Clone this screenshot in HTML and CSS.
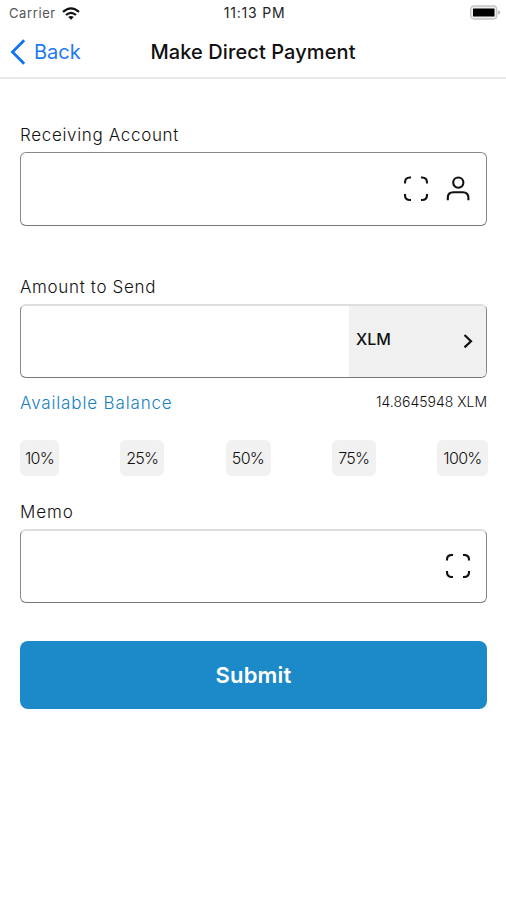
FILE: index.html
```html
<!DOCTYPE html>
<html lang="en">
<head>
<meta charset="utf-8">
<title>Make Direct Payment</title>
<link rel="stylesheet" href="styles.css">
</head>
<body>
<div class="status">
  <div class="carrier"><span class="carrier-name">Carrier</span>
    <svg width="18" height="13" viewBox="0 0 18 13" fill="none" stroke="#111" stroke-width="2.2"><path d="M1 4.8Q9-2.2 17 4.8M4 8Q9 3.6 14 8"/><path d="M6.2 10Q9 7.8 11.8 10L9 12.8Z" fill="#111" stroke="none"/></svg>
  </div>
  <span class="time">11:13 PM</span>
  <svg class="battery" width="31" height="16" viewBox="0 0 31 16"><rect x=".7" y="1" width="26" height="13" rx="3.2" fill="#eee" stroke="#c4c4c4" stroke-width="1.3"/><rect x="3" y="3.6" width="21.5" height="8" rx=".5" fill="#000"/><path d="M28.2 5.3Q30 6 30 7.5T28.2 9.7Z" fill="#aaa"/></svg>
</div>
<nav class="nav">
  <a class="back"><svg width="16" height="26" viewBox="0 0 16 26" fill="none" stroke="#0f73f5" stroke-width="2.8"><path d="M14.2 1.2 2.5 13 14.2 24.8"/></svg><span class="back-text">Back</span></a>
  <h1 class="title">Make Direct Payment</h1>
</nav>
<main class="form">
  <div class="label"><span class="l-account">Receiving Account</span></div>
  <div class="field account">
    <svg width="26" height="26" viewBox="0 0 26 26" fill="none" stroke="#111" stroke-width="2.1"><path d="M2 7.5V6.5Q2 1.5 7 1.5H8M18 1.5h1q5 0 5 5v1M24 18v1q0 5-5 5h-1M8 24H7q-5 0-5-5v-1"/></svg>
    <svg width="24" height="26" viewBox="0 0 24 26" fill="none" stroke="#111" stroke-width="2.1"><circle cx="12.3" cy="6.6" r="5.1"/><path d="M1.8 24.3v-2.5q0-5.6 5.6-5.6h9.4q5.6 0 5.6 5.6v2.5"/></svg>
  </div>
  <div class="label second"><span class="l-amount">Amount to Send</span></div>
  <div class="field soft amount">
    <div class="asset"><span class="asset-name">XLM</span><svg width="10" height="16" viewBox="0 0 10 16" fill="none" stroke="#111" stroke-width="2.2"><path d="M1.5 1 8 7.2l-6.5 6.2"/></svg></div>
  </div>
  <div class="balance"><span class="l-available">Available Balance</span><span class="value">14.8645948 XLM</span></div>
  <div class="pills"><span class="pill p10">10%</span><span class="pill p25">25%</span><span class="pill p50">50%</span><span class="pill p75">75%</span><span class="pill p100">100%</span></div>
  <div class="label memo-label"><span class="l-memo">Memo</span></div>
  <div class="field soft memo">
    <svg width="26" height="26" viewBox="0 0 26 26" fill="none" stroke="#111" stroke-width="2.1"><path d="M2 6.5V5.5Q2 .9 7 .9H8M18 .9h1q5 0 5 4.6v1M24 17v1q0 5-5 5h-1M8 23H7q-5 0-5-5v-1"/></svg>
  </div>
  <button class="submit">Submit</button>
</main>
</body>
</html>
```
FILE: styles.css
```css
* { box-sizing: border-box; }
body { margin: 0; min-height: 900px; background: #fff; color: #111; font-family: Inter, "Liberation Sans", sans-serif; }
svg { display: block; flex: none; }
.status { height: 26px; padding: 0 5px 0 9px; display: grid; grid-template-columns: 1fr auto 1fr; align-items: center; font-size: 13px; line-height: 26px; }
.carrier { display: flex; align-items: center; gap: 6px; color: #555; }
.carrier-name { letter-spacing: .6px; }
.time { letter-spacing: .8px; font-size: 14px; color: #222; font-weight: 400; margin-left: -1px; }
.battery { justify-self: end; }
.nav { height: 53px; border-bottom: 2px solid #e9e9e9; display: grid; grid-template-columns: 1fr auto 1fr; align-items: center; padding: 0 10px; }
.back { display: flex; align-items: center; gap: 8px; color: #1c7af5; font-size: 20px; }
.title { margin: 0; font-size: 20px; font-weight: 500; line-height: 26px; letter-spacing: .1px; color: #111; }
.form { padding: 44px 19px 0 20px; }
.label { height: 29px; line-height: 24px; font-size: 17px; font-weight: 300; color: #111; white-space: nowrap; }
.l-account, .l-amount { letter-spacing: .66px; }
.l-memo { letter-spacing: .9px; }
.field { height: 74px; border: 1px solid #888; border-bottom-color: #777; border-radius: 6px; display: flex; align-items: center; justify-content: flex-end; overflow: hidden; }
.soft { border-top: 2px solid #ddd; }
.account { gap: 17px; padding-right: 16px; }
.second { margin-top: 49px; }
.asset { width: 137px; height: 100%; background: #f0f0f0; display: flex; align-items: center; justify-content: space-between; padding: 0 13px 0 7px; }
.asset-name { font-size: 16px; font-weight: 500; line-height: 20px; padding-bottom: 6px; }
.balance { display: flex; justify-content: space-between; height: 62px; padding-top: 13px; line-height: 24px; font-weight: 300; white-space: nowrap; }
.l-available { color: #1780c4; font-size: 17px; letter-spacing: .85px; }
.value { font-size: 14px; line-height: 21px; }
.pills { display: flex; justify-content: space-between; margin-right: -1px; }
.pill { height: 36px; line-height: 37px; border-radius: 6px; background: #f1f1f1; text-align: center; font-size: 16px; font-weight: 300; color: #111; white-space: nowrap; letter-spacing: -.7px; }
.p10 { width: 39px; }
.p25, .p75 { width: 44px; }
.p50 { width: 45px; }
.p100 { width: 51px; }
.memo-label { margin-top: 24px; }
.memo { padding-right: 15px; }
.submit { display: block; width: 100%; height: 68px; margin-top: 38px; padding: 0; border: 0; border-radius: 8px; background: #1c89c9; color: #fff; font: 600 22px/68px Inter, "Liberation Sans", sans-serif; letter-spacing: .2px; }
```
